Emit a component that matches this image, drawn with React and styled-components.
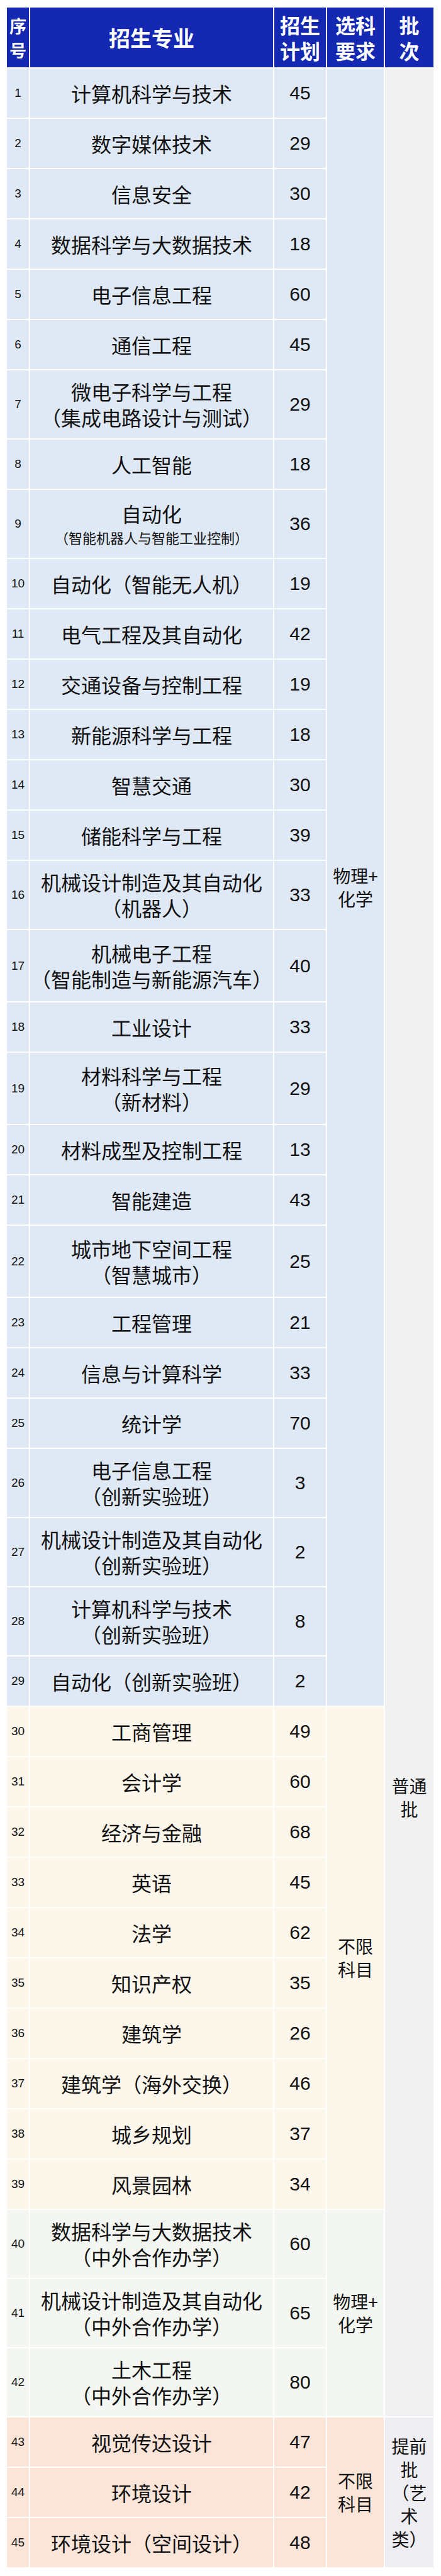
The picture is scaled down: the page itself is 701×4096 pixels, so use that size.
import React from 'react';
import styled, { createGlobalStyle } from 'styled-components';

const CJK = `"Noto Sans CJK SC", "Noto Sans", sans-serif`;
const NUM = `"Liberation Sans", Arial, sans-serif`;

const GlobalStyle = createGlobalStyle`
  body {
    margin: 0;
    background: #fff;
  }
`;

const colors = {
  head: '#1428b2',
  blue: '#dfe8f5',
  yellow: '#fdf6ea',
  green: '#f3f6f1',
  peach: '#fbe4d8',
  gray: '#f1f1f1',
  lilac: '#eeeef2',
};

const Page = styled.div`
  padding: 10px 0 16px 9px;
`;

const Table = styled.table`
  border-collapse: collapse;
  table-layout: fixed;
  width: 680px;
  font-family: ${CJK};
  color: #111;
`;

const Row = styled.tr`
  height: ${p => p.$h}px;
`;

const HeadCell = styled.th`
  background: ${colors.head};
  color: #fff;
  border: 2px solid #fff;
  padding: 0;
  font-weight: 700;
  font-size: ${p => p.$size || 32}px;
  line-height: ${p => p.$lh || 41}px;
  text-align: center;
  vertical-align: middle;
`;

const Cell = styled.td`
  background: ${p => p.$bg};
  border: 2px solid #fff;
  padding: 0;
  text-align: center;
  vertical-align: middle;
`;

const SeqCell = styled(Cell)`
  font-family: ${NUM};
  font-size: 19px;
`;

const MajorCell = styled(Cell)`
  font-size: 32px;
  line-height: 41px;
  white-space: nowrap;
`;

const SubLine = styled.div`
  font-size: ${p => (p.$small ? 22 : 32)}px;
  line-height: ${p => (p.$small ? 34 : 41)}px;
`;

const PlanCell = styled(Cell)`
  font-family: ${NUM};
  font-size: 30px;
`;

const SideCell = styled(Cell)`
  font-size: 28px;
  line-height: 37px;
  vertical-align: ${p => (p.$top ? 'top' : 'middle')};
  padding-top: ${p => p.$top || 0}px;
`;

const majors = [
  [1, '计算机科学与技术', null, 45],
  [2, '数字媒体技术', null, 29],
  [3, '信息安全', null, 30],
  [4, '数据科学与大数据技术', null, 18],
  [5, '电子信息工程', null, 60],
  [6, '通信工程', null, 45],
  [7, '微电子科学与工程', '（集成电路设计与测试）', 29],
  [8, '人工智能', null, 18],
  [9, '自动化', '（智能机器人与智能工业控制）', 36, true],
  [10, '自动化（智能无人机）', null, 19],
  [11, '电气工程及其自动化', null, 42],
  [12, '交通设备与控制工程', null, 19],
  [13, '新能源科学与工程', null, 18],
  [14, '智慧交通', null, 30],
  [15, '储能科学与工程', null, 39],
  [16, '机械设计制造及其自动化', '（机器人）', 33],
  [17, '机械电子工程', '（智能制造与新能源汽车）', 40],
  [18, '工业设计', null, 33],
  [19, '材料科学与工程', '（新材料）', 29],
  [20, '材料成型及控制工程', null, 13],
  [21, '智能建造', null, 43],
  [22, '城市地下空间工程', '（智慧城市）', 25],
  [23, '工程管理', null, 21],
  [24, '信息与计算科学', null, 33],
  [25, '统计学', null, 70],
  [26, '电子信息工程', '（创新实验班）', 3],
  [27, '机械设计制造及其自动化', '（创新实验班）', 2],
  [28, '计算机科学与技术', '（创新实验班）', 8],
  [29, '自动化（创新实验班）', null, 2],
  [30, '工商管理', null, 49],
  [31, '会计学', null, 60],
  [32, '经济与金融', null, 68],
  [33, '英语', null, 45],
  [34, '法学', null, 62],
  [35, '知识产权', null, 35],
  [36, '建筑学', null, 26],
  [37, '建筑学（海外交换）', null, 46],
  [38, '城乡规划', null, 37],
  [39, '风景园林', null, 34],
  [40, '数据科学与大数据技术', '（中外合作办学）', 60],
  [41, '机械设计制造及其自动化', '（中外合作办学）', 65],
  [42, '土木工程', '（中外合作办学）', 80],
  [43, '视觉传达设计', null, 47],
  [44, '环境设计', null, 42],
  [45, '环境设计（空间设计）', null, 48],
];

// subject requirement groups: first row, span, colour, label lines
const subjectGroups = {
  1: { span: 29, bg: colors.blue, lines: ['物理+', '化学'] },
  30: { span: 10, bg: colors.yellow, lines: ['不限', '科目'] },
  40: { span: 3, bg: colors.green, lines: ['物理+', '化学'] },
  43: { span: 3, bg: colors.peach, lines: ['不限', '科目'] },
};

const batchGroups = {
  1: { span: 42, bg: colors.gray, lines: ['普通', '批'], top: 2712 },
  43: { span: 3, bg: colors.lilac, lines: ['提前', '批', '（艺', '术', '类）'] },
};

const tallRows = [17, 19, 22];

const rowColor = no => {
  if (no <= 29) return colors.blue;
  if (no <= 39) return colors.yellow;
  if (no <= 42) return colors.green;
  return colors.peach;
};

const rowHeight = (no, sub) => {
  if (!sub) return 80;
  return tallRows.includes(no) ? 115 : 110;
};

const Lines = ({ lines }) =>
  lines.map((l, i) => (
    <React.Fragment key={i}>
      {i > 0 && <br />}
      {l}
    </React.Fragment>
  ));

const App = () => {
  return (
    <Page>
      <GlobalStyle />
      <Table>
        <colgroup>
          <col style={{ width: 37 }} />
          <col style={{ width: 388 }} />
          <col style={{ width: 84 }} />
          <col style={{ width: 92 }} />
          <col style={{ width: 79 }} />
        </colgroup>
        <thead>
          <Row $h={97}>
            <HeadCell $size={27} $lh={39}>
              序<br />号
            </HeadCell>
            <HeadCell $size={34}>招生专业</HeadCell>
            <HeadCell>
              招生<br />计划
            </HeadCell>
            <HeadCell>
              选科<br />要求
            </HeadCell>
            <HeadCell>
              批<br />次
            </HeadCell>
          </Row>
        </thead>
        <tbody>
          {majors.map(([no, name, sub, plan, small]) => {
            const bg = rowColor(no);
            const subject = subjectGroups[no];
            const batch = batchGroups[no];
            return (
              <Row key={no} $h={rowHeight(no, sub)}>
                <SeqCell $bg={bg}>{no}</SeqCell>
                <MajorCell $bg={bg}>
                  <div>{name}</div>
                  {sub && <SubLine $small={small}>{sub}</SubLine>}
                </MajorCell>
                <PlanCell $bg={bg}>{plan}</PlanCell>
                {subject && (
                  <SideCell rowSpan={subject.span} $bg={subject.bg}>
                    <Lines lines={subject.lines} />
                  </SideCell>
                )}
                {batch && (
                  <SideCell rowSpan={batch.span} $bg={batch.bg} $top={batch.top}>
                    <Lines lines={batch.lines} />
                  </SideCell>
                )}
              </Row>
            );
          })}
        </tbody>
      </Table>
    </Page>
  );
};

export default App;
